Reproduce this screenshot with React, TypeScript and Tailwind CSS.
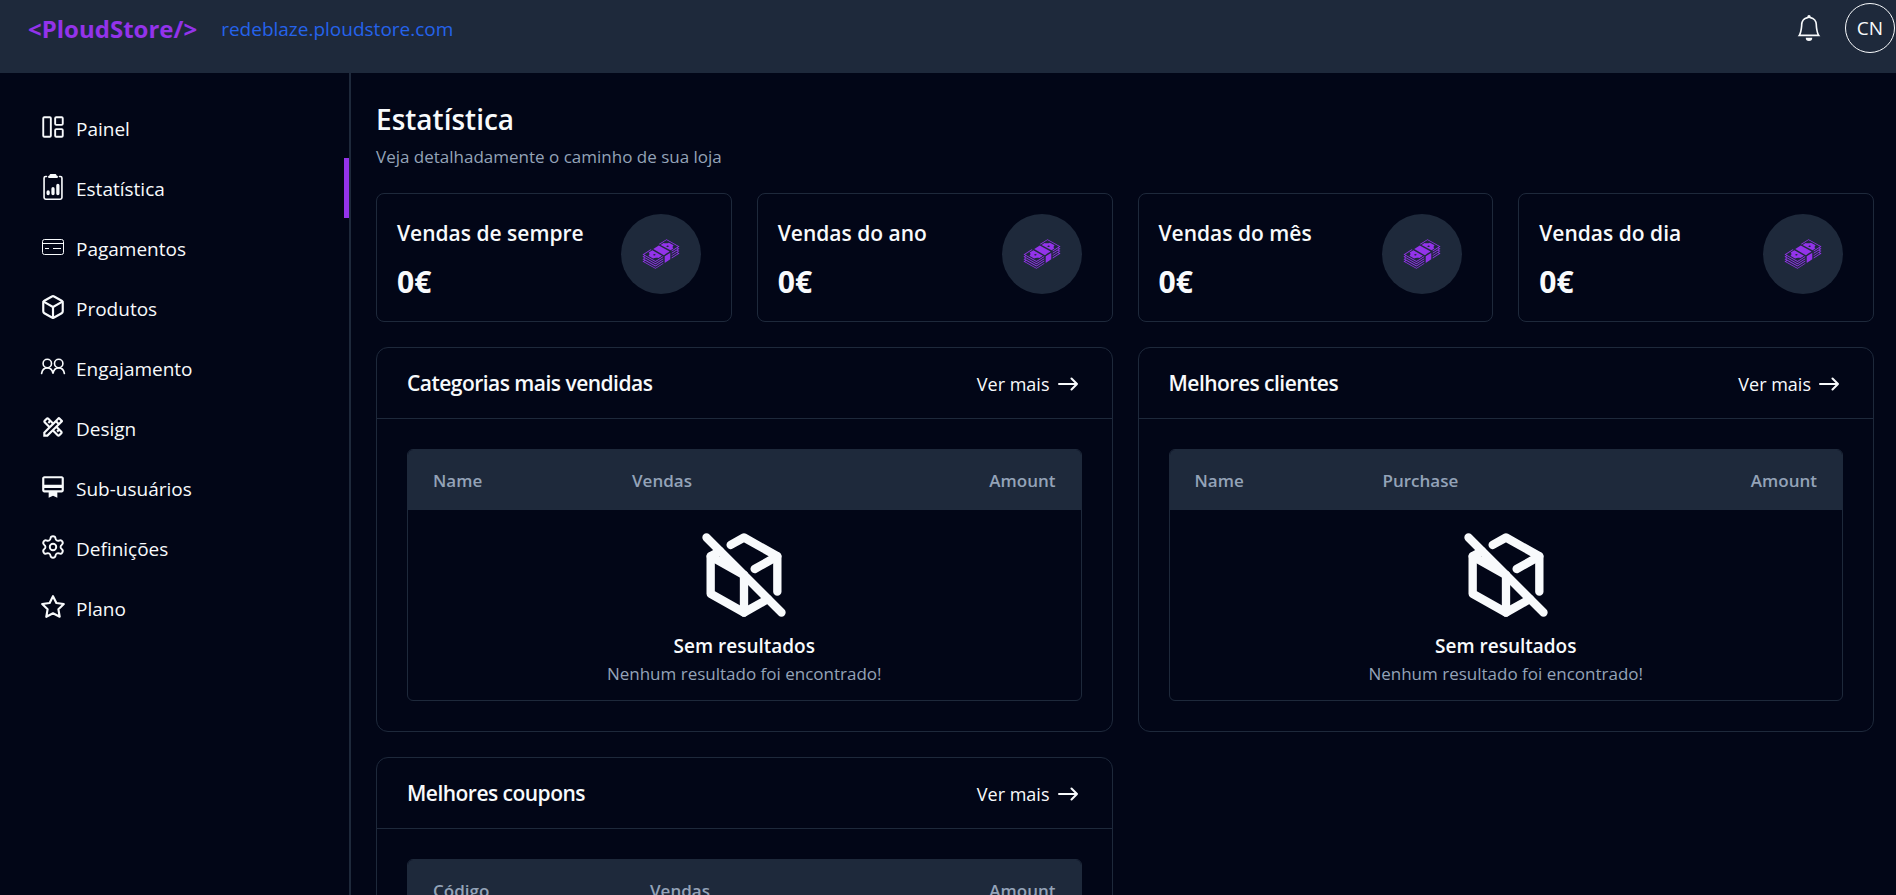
import React from 'react';
import { Box, LayoutPanelLeft, Settings } from 'lucide-react';
import { BsBell, BsClipboard2Data } from 'react-icons/bs';
import { FiStar } from 'react-icons/fi';
import { GiMoneyStack } from 'react-icons/gi';
import { MdOutlineCardMembership, MdOutlineDesignServices } from 'react-icons/md';
import { TbBoxOff } from 'react-icons/tb';

const CardIcon: React.FC = () => (
    <svg width="26" height="26" viewBox="0 0 26 26" fill="none" stroke="currentColor">
        <rect x="2.5" y="5.5" width="21" height="15" rx="2" />
        <path d="M2.5 9.5h21M5 14.5h4M13 14.5h8" />
    </svg>
);

const PeopleIcon: React.FC = () => (
    <svg width="26" height="26" viewBox="0 0 26 26" fill="none" stroke="currentColor" strokeWidth="1.6" strokeLinecap="round">
        <circle cx="7.3" cy="9.500" r="4.2" />
        <circle cx="18.7" cy="9.500" r="4.2" />
        <path d="M1.6 19.500c.6-3.4 2.8-5.6 5.7-5.6s5.1 2.2 5.7 5.6c.6-3.4 2.8-5.6 5.7-5.6s5.1 2.2 5.7 5.6" />
    </svg>
);

const ArrowIcon: React.FC = () => (
    <svg width="20" height="14" viewBox="0 0 20 14" fill="none" stroke="currentColor" strokeWidth="2" strokeLinecap="round" strokeLinejoin="round">
        <path d="M1 7h18M13.5 1.5 19 7l-5.5 5.5" />
    </svg>
);

const menu = [
    { label: 'Painel', icon: <LayoutPanelLeft size={26} strokeWidth={1.75} /> },
    { label: 'Estatística', icon: <BsClipboard2Data size={26} />, active: true },
    { label: 'Pagamentos', icon: <CardIcon /> },
    { label: 'Produtos', icon: <Box size={26} strokeWidth={2} /> },
    { label: 'Engajamento', icon: <PeopleIcon /> },
    { label: 'Design', icon: <MdOutlineDesignServices size={26} /> },
    { label: 'Sub-usuários', icon: <MdOutlineCardMembership size={26} /> },
    { label: 'Definições', icon: <Settings size={26} strokeWidth={1.75} /> },
    { label: 'Plano', icon: <FiStar size={26} /> },
];

const stats = [
    { title: 'Vendas de sempre', value: '0€' },
    { title: 'Vendas do ano', value: '0€' },
    { title: 'Vendas do mês', value: '0€' },
    { title: 'Vendas do dia', value: '0€' },
];

const panels = [
    { title: 'Categorias mais vendidas', columns: ['Name', 'Vendas', 'Amount'], firstCol: 'w-[199px]' },
    { title: 'Melhores clientes', columns: ['Name', 'Purchase', 'Amount'], firstCol: 'w-[188px]' },
    { title: 'Melhores coupons', columns: ['Código', 'Vendas', 'Amount'], firstCol: 'w-[217px]' },
];

const TopBar: React.FC = () => (
    <header className="flex items-center justify-between bg-[#1e293b] pt-[3px] pb-5 pl-7 pr-px">
        <div className="flex items-center gap-6 pt-0.5">
            <a href="#" className="text-2xl font-bold text-[#9333ea]">
                {'<PloudStore/>'}
            </a>
            <a href="#" className="text-[19px] text-[#2563eb]">
                redeblaze.ploudstore.com
            </a>
        </div>
        <div className="flex items-center gap-[23px]">
            <button type="button" aria-label="Notificações">
                <BsBell size={26} />
            </button>
            <button type="button" className="h-[50px] w-[50px] rounded-full border border-[#f8fafc] text-[19px]">
                CN
            </button>
        </div>
    </header>
);

const Sidebar: React.FC = () => (
    <nav className="w-[351px] shrink-0 border-r-2 border-[#1e293b] pt-[25px]">
        {menu.map((item) => (
            <a
                key={item.label}
                href="#"
                className={`flex h-[60px] items-center gap-2.5 pt-0.5 pl-10 text-[19px] ${item.active ? 'border-r-[5px] border-[#9333ea]' : ''}`}
            >
                <span className="pb-1">{item.icon}</span>
                {item.label}
            </a>
        ))}
    </nav>
);

const StatCard: React.FC<{ title: string; value: string }> = ({ title, value }) => (
    <div className="flex justify-between rounded-lg border border-[#1e293b] pt-5 pr-[30px] pb-[19px] pl-5">
        <div>
            <h2 className="text-[21px] leading-[38px] font-semibold">{title}</h2>
            <p className="mt-2.5 text-[30px] leading-10 font-bold">{value}</p>
        </div>
        <div className="flex h-20 w-20 items-center justify-center rounded-full bg-[#1e293b] text-[#9333ea]">
            <GiMoneyStack size={40} />
        </div>
    </div>
);

const Panel: React.FC<{ title: string; columns: string[]; firstCol: string }> = ({ title, columns, firstCol }) => (
    <section className="rounded-xl border border-[#1e293b]">
        <div className="flex h-[71px] items-center justify-between border-b border-[#1e293b] pt-0.5 pl-[30px] pr-[34px]">
            <h2 className="text-[21px] font-semibold tracking-tight">{title}</h2>
            <a href="#" className="flex items-center gap-2 text-lg">
                Ver mais
                <ArrowIcon />
            </a>
        </div>
        <div className="p-[30px]">
            <div className="overflow-hidden rounded-md border border-[#1e293b]">
                <table className="w-full table-fixed text-[17px]">
                    <thead className="bg-[#1e293b] text-[#94a3b8]">
                        <tr className="h-[60px]">
                            <th className={`px-[25px] pt-0.5 text-left font-semibold ${firstCol}`}>{columns[0]}</th>
                            <th className="px-[25px] pt-0.5 text-left font-semibold">{columns[1]}</th>
                            <th className="px-[25px] pt-0.5 text-right font-semibold">{columns[2]}</th>
                        </tr>
                    </thead>
                    <tbody>
                        <tr>
                            <td colSpan={3} className="pt-[15px] pb-3.5 text-center">
                                <TbBoxOff size={100} className="mx-auto mb-[5px]" />
                                <p className="text-[19px] leading-8 font-semibold">Sem resultados</p>
                                <p className="leading-6 text-[#94a3b8]">Nenhum resultado foi encontrado!</p>
                            </td>
                        </tr>
                    </tbody>
                </table>
            </div>
        </div>
    </section>
);

const App: React.FC = () => {
    return (
        <div className="flex min-h-screen flex-col bg-[#020617] font-['Open_Sans','Noto_Sans',sans-serif] text-[#f8fafc]">
            <TopBar />
            <div className="flex grow">
                <Sidebar />
                <main className="min-w-0 grow pt-6 pr-[22px] pb-6 pl-[25px]">
                    <h1 className="text-[28px] leading-[44px] font-semibold">Estatística</h1>
                    <p className="text-[17px] leading-8 text-[#94a3b8]">Veja detalhadamente o caminho de sua loja</p>
                    <div className="mt-5 grid grid-cols-4 gap-[25px]">
                        {stats.map((s) => (
                            <StatCard key={s.title} {...s} />
                        ))}
                    </div>
                    <div className="mt-[25px] grid grid-cols-2 gap-[25px]">
                        {panels.map((p) => (
                            <Panel key={p.title} {...p} />
                        ))}
                    </div>
                </main>
            </div>
        </div>
    );
};

export default App;
